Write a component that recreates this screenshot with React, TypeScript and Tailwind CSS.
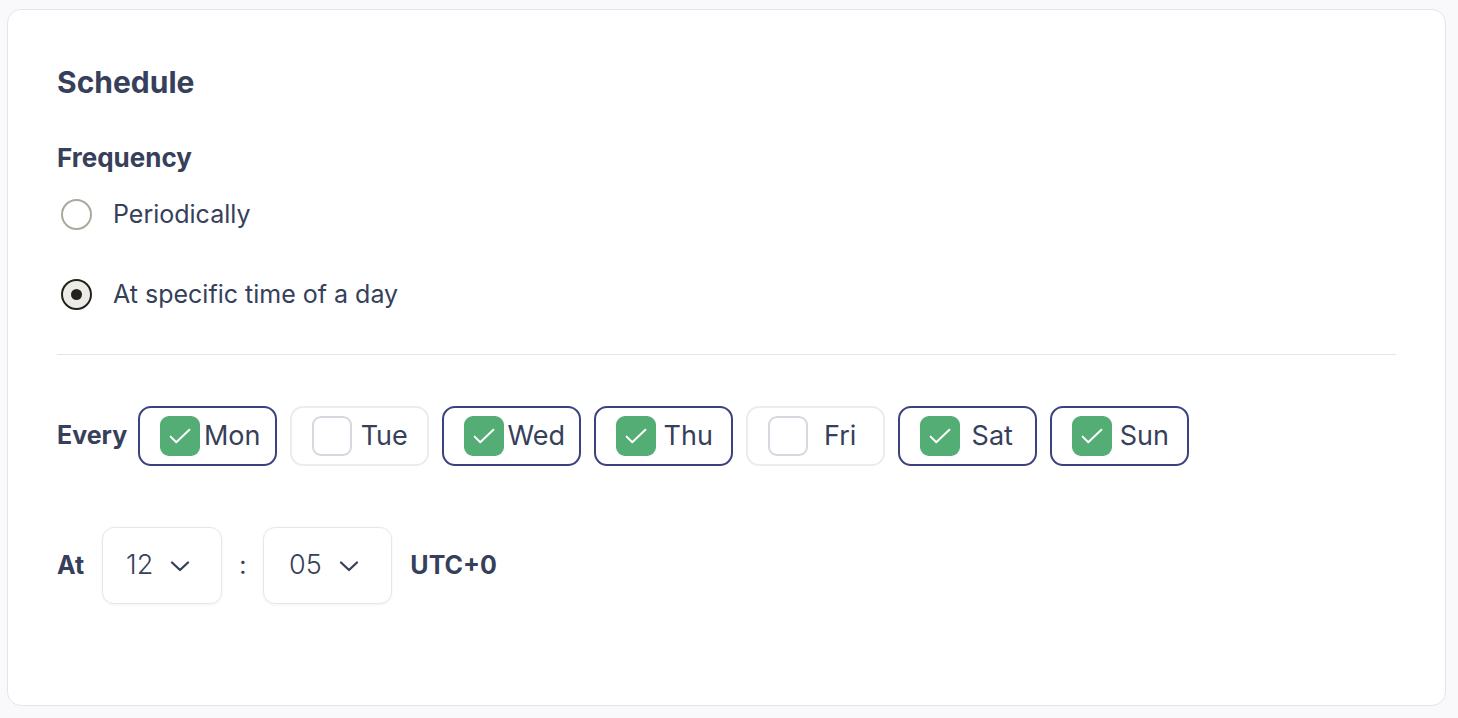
import { useState } from 'react';

const DAYS = ['Mon', 'Tue', 'Wed', 'Thu', 'Fri', 'Sat', 'Sun'];

function Check() {
    return (
        <svg width="30" height="30" viewBox="0 0 24 24" fill="none" stroke="white" strokeWidth="1.6" strokeLinecap="round" strokeLinejoin="round">
            <path d="M4.5 12.5l4.5 4.5L19.5 7" />
        </svg>
    );
}

function Chevron() {
    return (
        <svg width="24" height="24" viewBox="0 0 24 24" fill="none" stroke="#36405a" strokeWidth="2.3" strokeLinecap="round" strokeLinejoin="round">
            <path d="M4 8.5l8 7.5 8-7.5" />
        </svg>
    );
}

function Radio({ checked, label, onClick }: { checked: boolean; label: string; onClick: () => void }) {
    return (
        <button onClick={onClick} className="flex items-center gap-[21px] h-[40px] text-left">
            {checked ? (
                <span className="w-[31px] h-[31px] rounded-full border-2 border-[#23231c] bg-[#ecebe6] flex items-center justify-center">
                    <span className="w-[11px] h-[11px] rounded-full bg-[#23231c]"></span>
                </span>
            ) : (
                <span className="w-[31px] h-[31px] rounded-full border-2 border-[#a9a99c] bg-white"></span>
            )}
            <span className="text-[25px] text-[#36405a] leading-[40px]">{label}</span>
        </button>
    );
}

function TimeSelect({ value, width }: { value: string; width: string }) {
    return (
        <div className={`${width} h-[77px] rounded-[12px] border border-[#e6e7ec] bg-white shadow-[0_1px_3px_rgba(0,0,0,0.05)] flex items-center justify-center gap-[15px] pr-[6px]`}>
            <span className="text-[27px] font-light text-[#36405a]">{value}</span>
            <Chevron />
        </div>
    );
}

export default function App() {
    const [mode, setMode] = useState<'periodic' | 'specific'>('specific');
    const [days, setDays] = useState<Record<string, boolean>>({
        Mon: true, Tue: false, Wed: true, Thu: true, Fri: false, Sat: true, Sun: true,
    });

    return (
        <div className="min-h-screen bg-[#f9f9fb] p-[7px] pt-[9px] pb-[12px]" style={{ fontFamily: 'Inter, "Noto Sans", sans-serif' }}>
            <div className="h-[697px] w-[1439px] bg-white border border-[#e4e5ea] rounded-[14px] px-[49px] pt-[54px]">
                <h2 className="text-[30px] font-bold text-[#36405a] leading-[36px]">Schedule</h2>

                <h3 className="mt-[43px] text-[26px] font-bold text-[#36405a] leading-[30px]">Frequency</h3>

                <div className="mt-[21px] flex flex-col gap-[40px] pl-[4px]">
                    <Radio checked={mode === 'periodic'} label="Periodically" onClick={() => setMode('periodic')} />
                    <Radio checked={mode === 'specific'} label="At specific time of a day" onClick={() => setMode('specific')} />
                </div>

                <div className="mt-[40px] border-t border-[#e4e5ea]"></div>

                <div className="mt-[51px] flex items-center">
                    <span className="text-[25px] font-bold text-[#36405a] mr-[11px]">Every</span>
                    <div className="flex gap-[13px]">
                        {DAYS.map(d => {
                            const on = days[d];
                            return (
                                <button
                                    key={d}
                                    onClick={() => setDays({ ...days, [d]: !on })}
                                    className={`w-[139px] h-[60px] rounded-[13px] flex items-center pl-[20px] ${on ? 'border-2 border-[#3b4280]' : 'border-2 border-[#ececf0]'}`}
                                >
                                    {on ? (
                                        <span className="w-[40px] h-[40px] rounded-[9px] bg-[#55ad76] flex items-center justify-center">
                                            <Check />
                                        </span>
                                    ) : (
                                        <span className="w-[40px] h-[40px] rounded-[9px] border-2 border-[#d5d8de] bg-white"></span>
                                    )}
                                    <span className="w-[64px] text-center text-[27px] text-[#36405a] whitespace-nowrap">{d}</span>
                                </button>
                            );
                        })}
                    </div>
                </div>

                <div className="mt-[61px] flex items-center">
                    <span className="text-[25px] font-bold text-[#36405a] mr-[18px]">At</span>
                    <TimeSelect value="12" width="w-[120px]" />
                    <span className="mx-[17px] text-[25px] text-[#36405a]">:</span>
                    <TimeSelect value="05" width="w-[129px]" />
                    <span className="ml-[18px] text-[25px] font-bold text-[#36405a]">UTC+0</span>
                </div>
            </div>
        </div>
    );
}
